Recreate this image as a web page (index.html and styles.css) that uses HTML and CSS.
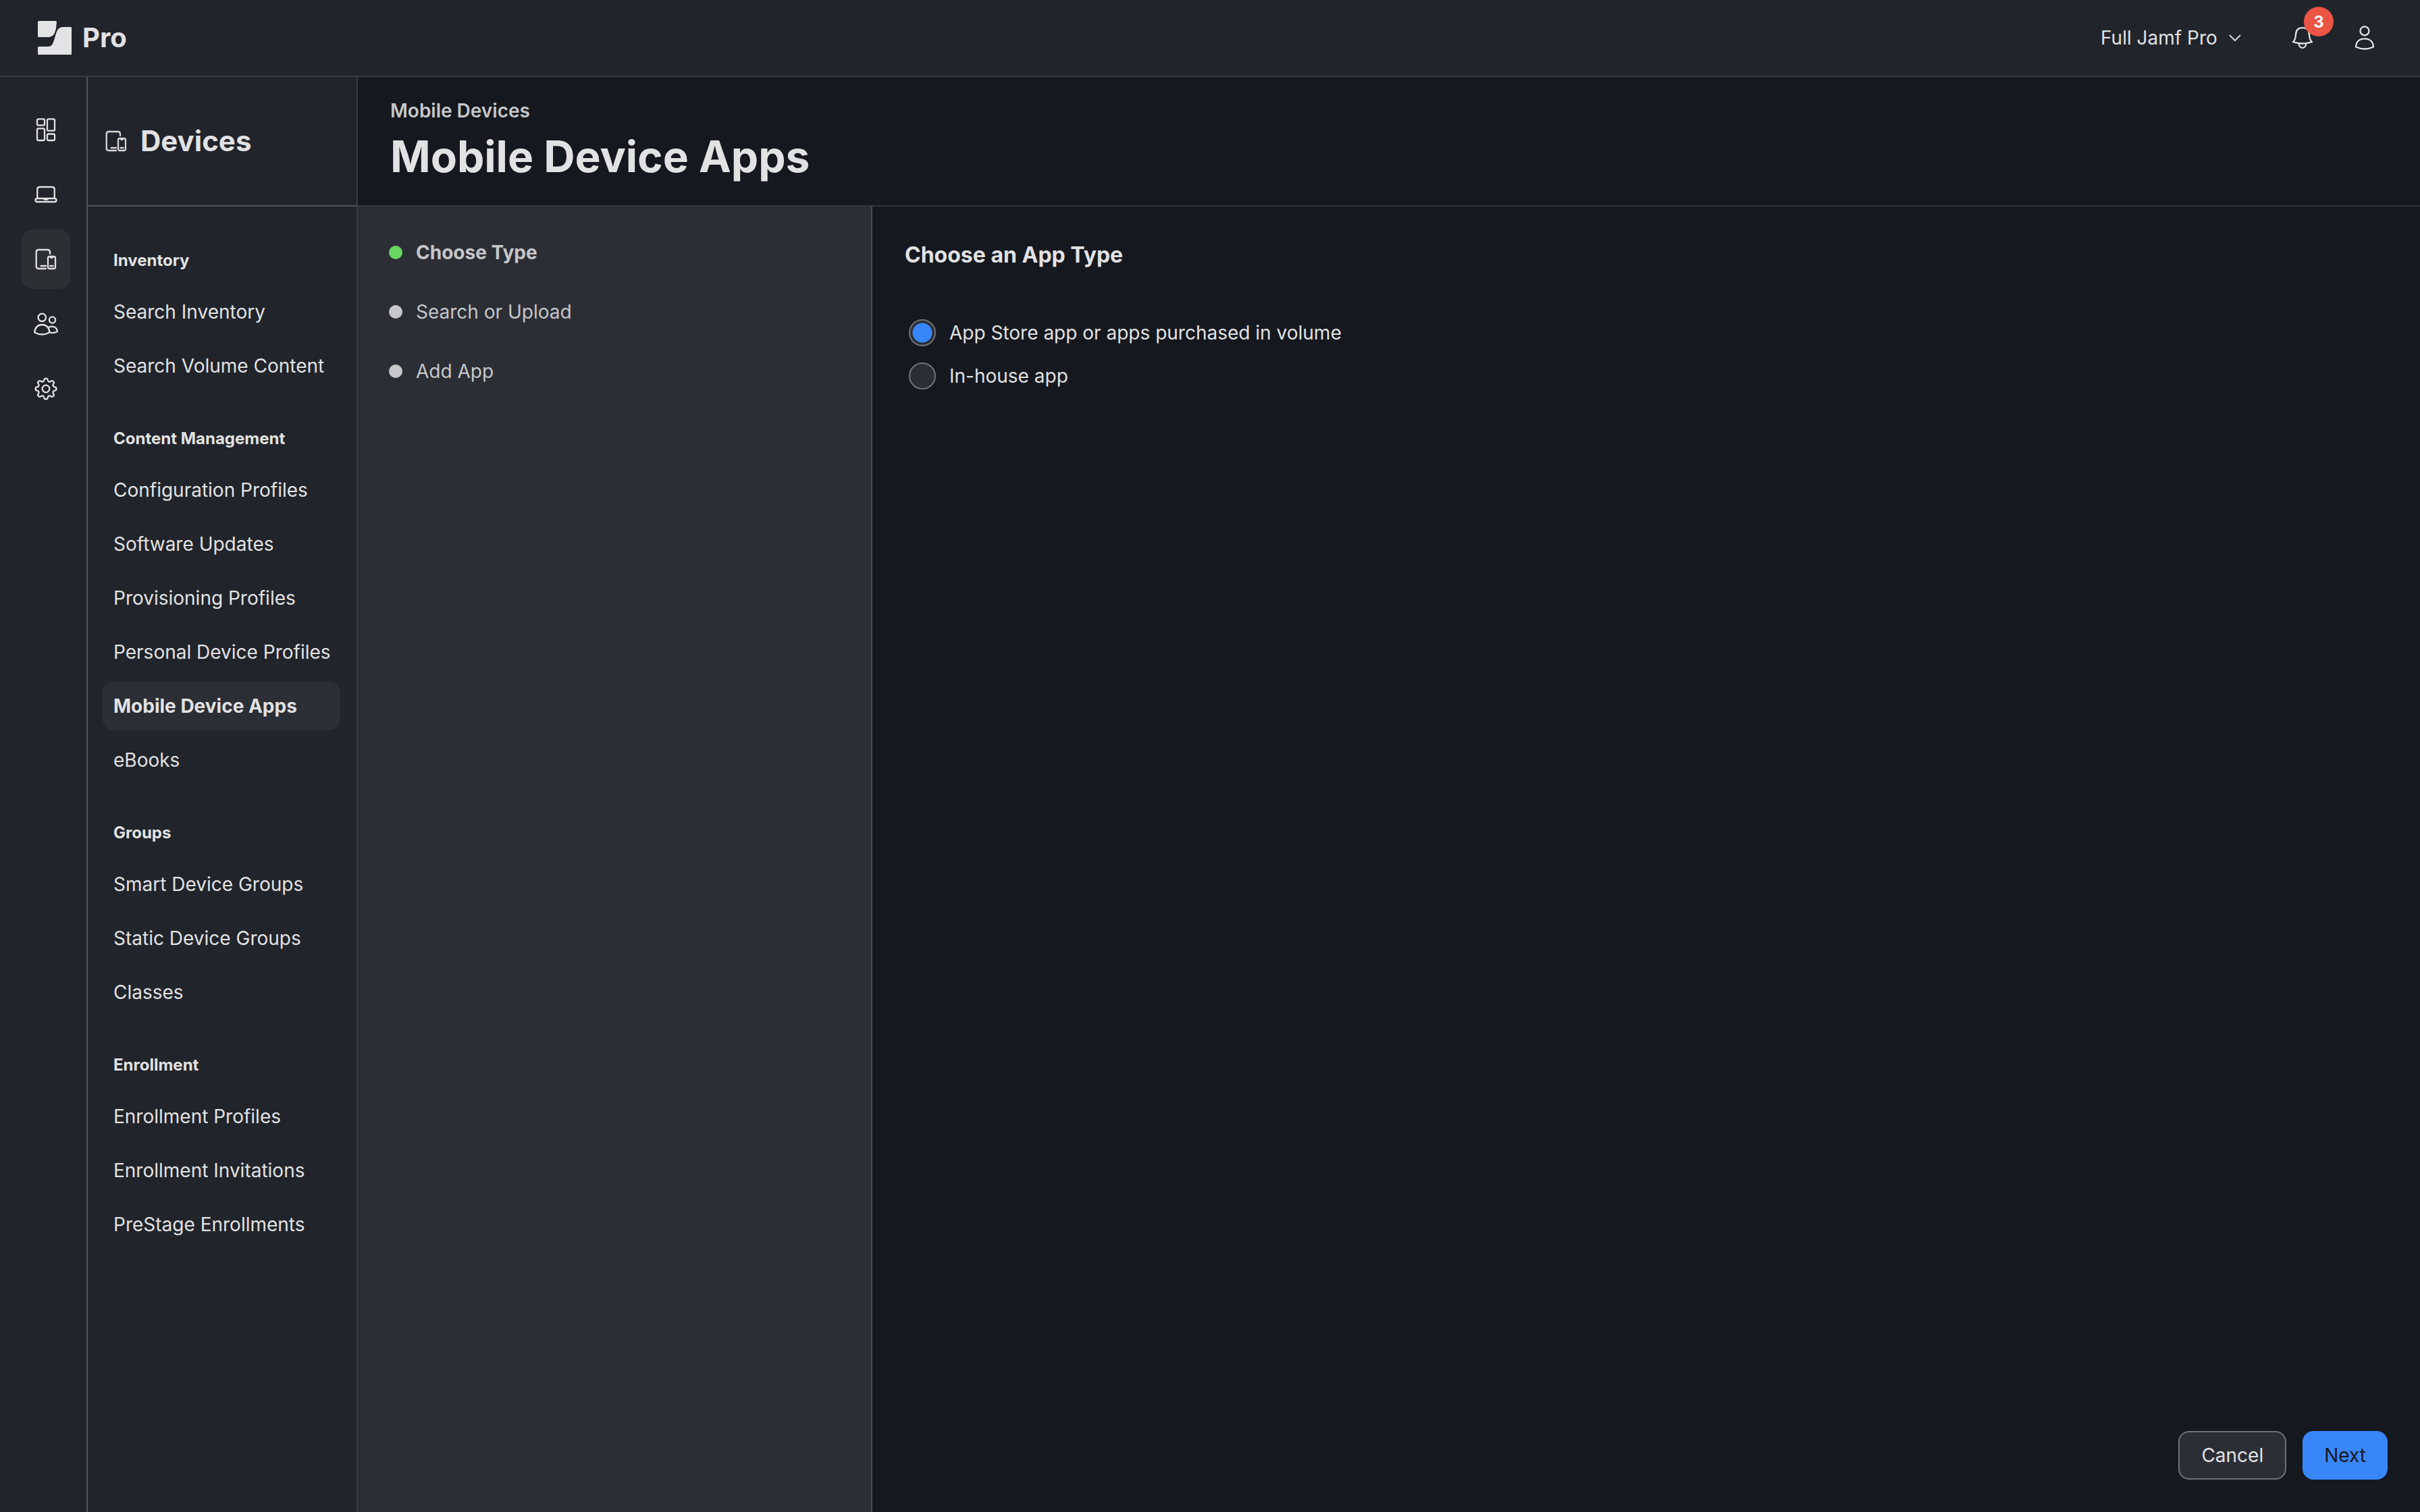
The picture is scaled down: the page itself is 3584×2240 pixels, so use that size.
FILE: index.html
```html
<!DOCTYPE html>
<html lang="en">
<head>
  <meta charset="UTF-8" />
  <meta name="viewport" content="width=device-width, initial-scale=1.0"/>
  <title>Mobile Device Apps</title>
  <link rel="stylesheet" href="styles.css">
</head>
<body>
  <!-- Icons used more than once -->
  <svg class="sprite" aria-hidden="true">
    <symbol id="icon-devices" viewBox="0 0 40 40">
      <path d="M26 12V9.500Q26 6 22.500 6H9.200Q5.700 6 5.700 9.500V30.500Q5.700 34 9.200 34H20M12.500 30H20"/>
      <rect x="23" y="16" width="11" height="18" rx="2.500"/>
      <path d="M26.500 16.500Q27 18 28.500 18T30.500 16.500M26.300 30H30.700"/>
    </symbol>
    <symbol id="gear-tooth" viewBox="-20 -20 40 40">
      <path d="M-4.400 -10.700C-3.200 -11.200 -2.800 -11.800 -2.700 -13C-2.500 -16.300 2.500 -16.300 2.700 -13C2.800 -11.800 3.200 -11.200 4.400 -10.700"/>
    </symbol>
  </svg>

  <header class="topbar">
    <a class="logo" href="#">
      <svg class="logo-mark" viewBox="0 0 50 50" aria-hidden="true">
        <path d="M1.500 0H26.500Q28 0 27.900 1.500C27 14 25.500 24 15 24H1.500Q0 24 0 22.500V1.500Q0 0 1.500 0Z"/>
        <path d="M38 9H49Q50 9 50 10V49Q50 50 49 50H1.500Q0 50 0 48.500V39.500Q0 38 1.500 38H14C21 38 22 35 24.500 27C28 15 29 9 38 9Z"/>
      </svg>
      <span>Pro</span>
    </a>
    <div class="topbar-right">
      <div class="site-picker">
        <select class="site-select" aria-label="Site">
          <option>Full Jamf Pro</option>
        </select>
        <svg class="chevron" viewBox="0 0 24 24" aria-hidden="true"><path d="M4 8L12 16L20 8"/></svg>
      </div>
      <button class="icon-btn bell" type="button" aria-label="Notifications">
        <svg class="icon" viewBox="0 0 40 40" aria-hidden="true">
          <path d="M6 26.200C9 23.500 9.800 20 10 15.500C10.300 8.800 14 5.200 20 5.200S29.700 8.800 30 15.500C30.200 20 31 23.500 34 26.200Q20 30.800 6 26.200Z"/>
          <path d="M14.700 28.500C15 37 25 37 25.300 28.500"/>
        </svg>
        <span class="badge">3</span>
      </button>
      <button class="icon-btn" type="button" aria-label="Account">
        <svg class="icon" viewBox="0 0 40 40" aria-hidden="true">
          <circle cx="20" cy="9.800" r="6.500"/>
          <path d="M7 33.500C7.500 25.500 12.500 21.300 20 21.300S32.500 25.500 33 33.500Q20 39.500 7 33.500Z"/>
        </svg>
      </button>
    </div>
  </header>

  <div class="layout">
    <nav class="rail" aria-label="Main">
      <a class="rail-item" href="#" aria-label="Dashboard">
        <svg class="icon" viewBox="0 0 40 40" aria-hidden="true">
          <rect x="7" y="4.300" width="11" height="9.400" rx="2"/>
          <rect x="7" y="18.300" width="11" height="17.700" rx="2"/>
          <rect x="22" y="4.300" width="11" height="17.400" rx="2"/>
          <rect x="22" y="26.500" width="11" height="9.500" rx="2"/>
        </svg>
      </a>
      <a class="rail-item" href="#" aria-label="Computers">
        <svg class="icon" viewBox="0 0 40 40" aria-hidden="true">
          <path d="M7.300 25.500V12.500Q7.300 9 10.800 9H29.200Q32.700 9 32.700 12.500V25.500"/>
          <rect x="4.500" y="26" width="31" height="5" rx="2.500"/>
          <path d="M17.500 27.500H22.500"/>
        </svg>
      </a>
      <a class="rail-item active" href="#" aria-label="Devices">
        <svg class="icon" aria-hidden="true"><use href="#icon-devices"/></svg>
      </a>
      <a class="rail-item" href="#" aria-label="Users">
        <svg class="icon" viewBox="0 0 40 40" aria-hidden="true">
          <circle cx="14.300" cy="10.300" r="5.700"/>
          <circle cx="29.500" cy="14" r="4.600"/>
          <path d="M3.200 32.500C3.500 25.500 8 21 14.300 21S25.100 25.500 25.400 32.500Q14.300 38.500 3.200 32.500Z"/>
          <path d="M23.500 25.200C29 21.800 36.500 24 36.800 31.300Q31.500 34 25.800 32.500"/>
        </svg>
      </a>
      <a class="rail-item" href="#" aria-label="Settings">
        <svg class="icon" viewBox="-20 -20 40 40" aria-hidden="true">
          <circle r="5.300"/>
          <use href="#gear-tooth" x="-20" y="-20" width="40" height="40"/>
          <use href="#gear-tooth" x="-20" y="-20" width="40" height="40" transform="rotate(45)"/>
          <use href="#gear-tooth" x="-20" y="-20" width="40" height="40" transform="rotate(90)"/>
          <use href="#gear-tooth" x="-20" y="-20" width="40" height="40" transform="rotate(135)"/>
          <use href="#gear-tooth" x="-20" y="-20" width="40" height="40" transform="rotate(180)"/>
          <use href="#gear-tooth" x="-20" y="-20" width="40" height="40" transform="rotate(225)"/>
          <use href="#gear-tooth" x="-20" y="-20" width="40" height="40" transform="rotate(270)"/>
          <use href="#gear-tooth" x="-20" y="-20" width="40" height="40" transform="rotate(315)"/>
        </svg>
      </a>
    </nav>

    <aside class="sidebar">
      <div class="sidebar-title">
        <svg class="icon" aria-hidden="true"><use href="#icon-devices"/></svg>
        <h2>Devices</h2>
      </div>
      <nav class="menu" aria-label="Devices">
        <section class="menu-group">
          <h3>Inventory</h3>
          <a href="#">Search Inventory</a>
          <a href="#">Search Volume Content</a>
        </section>
        <section class="menu-group">
          <h3>Content Management</h3>
          <a href="#">Configuration Profiles</a>
          <a href="#">Software Updates</a>
          <a href="#">Provisioning Profiles</a>
          <a href="#">Personal Device Profiles</a>
          <a class="active" href="#">Mobile Device Apps</a>
          <a href="#">eBooks</a>
        </section>
        <section class="menu-group">
          <h3>Groups</h3>
          <a href="#">Smart Device Groups</a>
          <a href="#">Static Device Groups</a>
          <a href="#">Classes</a>
        </section>
        <section class="menu-group">
          <h3>Enrollment</h3>
          <a href="#">Enrollment Profiles</a>
          <a href="#">Enrollment Invitations</a>
          <a href="#">PreStage Enrollments</a>
        </section>
      </nav>
    </aside>

    <main class="page">
      <div class="page-header">
        <a class="breadcrumb" href="#">Mobile Devices</a>
        <h1>Mobile Device Apps</h1>
      </div>
      <div class="page-body">
        <ol class="steps">
          <li class="current">Choose Type</li>
          <li>Search or Upload</li>
          <li>Add App</li>
        </ol>
        <form class="panel">
          <h2 id="typeTitle">Choose an App Type</h2>
          <div class="options" role="radiogroup" aria-labelledby="typeTitle">
            <label class="option"><input type="radio" name="appType" value="store" checked>App Store app or apps purchased in volume</label>
            <label class="option"><input type="radio" name="appType" value="inhouse">In-house app</label>
          </div>
          <div class="actions">
            <button class="btn" type="button">Cancel</button>
            <button class="btn btn-primary" type="button">Next</button>
          </div>
        </form>
      </div>
    </main>
  </div>
</body>
</html>
```

FILE: styles.css
```css
* {
  box-sizing: border-box;
}

body {
  margin: 0;
  min-height: 100vh;
  display: flex;
  flex-direction: column;
  font-family: Inter, sans-serif;
  font-optical-sizing: none;
  font-size: 28px;
  line-height: 40px;
  color: #e2e2e3;
  background-color: #15181f;
}

h1,
h2,
h3 {
  margin: 0;
}

a {
  color: inherit;
  text-decoration: none;
}

button,
select {
  font: inherit;
  color: inherit;
}

.sprite {
  display: none;
}

.icon {
  display: block;
  width: 40px;
  height: 40px;
  flex-shrink: 0;
  fill: none;
  stroke: #d6d7d8;
  stroke-width: 2.3;
  stroke-linecap: round;
  stroke-linejoin: round;
}

/* Top bar */
.topbar {
  display: flex;
  align-items: center;
  justify-content: space-between;
  height: 114px;
  padding: 0 62px 0 56px;
  background-color: #21242b;
  border-bottom: 2px solid #3b3c40;
}

.logo {
  display: flex;
  align-items: center;
  gap: 16px;
  font-size: 40px;
  font-weight: 700;
}

.logo-mark {
  width: 50px;
  height: 50px;
  fill: #e2e3e5;
}

.topbar-right {
  display: flex;
  align-items: center;
}

.site-picker {
  display: flex;
  align-items: center;
  gap: 14px;
  margin-right: 68px;
}

.site-select {
  appearance: none;
  padding: 0;
  border: none;
  background: none;
  cursor: pointer;
}

.chevron {
  width: 24px;
  height: 24px;
  fill: none;
  stroke: #d6d7d8;
  stroke-width: 2;
  pointer-events: none;
}

.icon-btn {
  padding: 0;
  border: none;
  background: none;
  cursor: pointer;
}

.icon-btn .icon,
.rail-item .icon {
  stroke: #e2e2e3;
}

.bell {
  position: relative;
  margin-right: 52px;
}

.badge {
  position: absolute;
  top: -26px;
  left: 22px;
  width: 44px;
  height: 44px;
  border-radius: 50%;
  background-color: #ec5545;
  color: #fff;
  font-size: 24px;
  font-weight: 700;
  line-height: 46px;
  text-align: center;
}

.layout {
  display: flex;
  flex: 1;
}

/* Icon rail */
.rail {
  display: flex;
  flex-direction: column;
  gap: 8px;
  flex-shrink: 0;
  width: 130px;
  padding: 34px 24px 34px 32px;
  background-color: #21242b;
  border-right: 2px solid #545457;
}

.rail-item {
  display: flex;
  align-items: center;
  justify-content: center;
  height: 88px;
  border-radius: 16px;
}

.rail-item.active {
  background-color: #2c2f33;
}

/* Devices menu */
.sidebar {
  flex-shrink: 0;
  width: 400px;
  background-color: #21242b;
  border-right: 2px solid #3b3c40;
}

.sidebar-title {
  display: flex;
  align-items: center;
  gap: 16px;
  height: 192px;
  padding-left: 22px;
  border-bottom: 2px solid #545457;
}

.sidebar-title h2 {
  font-size: 42px;
  font-weight: 700;
}

.menu {
  display: flex;
  flex-direction: column;
  gap: 54px;
  padding: 62px 24px 62px 22px;
}

.menu-group {
  display: flex;
  flex-direction: column;
  gap: 8px;
}

.menu h3 {
  margin-bottom: 14px;
  padding-left: 16px;
  font-size: 24px;
  font-weight: 700;
  line-height: 36px;
}

.menu a {
  padding: 16px;
  border-radius: 16px;
  white-space: nowrap;
}

.menu .active {
  background-color: #2c2e36;
  font-weight: 700;
}

/* Page */
.page {
  display: flex;
  flex-direction: column;
  flex: 1;
}

.page-header {
  display: flex;
  flex-direction: column;
  gap: 8px;
  height: 192px;
  padding: 30px 48px;
  border-bottom: 2px solid #313438;
}

.page-header h1 {
  font-size: 64px;
  font-weight: 700;
  line-height: 80px;
}

.breadcrumb {
  align-self: flex-start;
  color: #c6c7c9;
  font-weight: 600;
}

.page-body {
  display: flex;
  flex: 1;
}

.steps {
  display: flex;
  flex-direction: column;
  gap: 48px;
  flex-shrink: 0;
  width: 762px;
  margin: 0;
  padding: 48px 46px;
  list-style: none;
  color: #c6c7c9;
  background-color: #2c2e36;
  border-right: 2px solid #494b4f;
}

.steps li {
  display: flex;
  align-items: center;
  gap: 20px;
}

.steps li::before {
  content: '';
  width: 20px;
  height: 20px;
  border-radius: 50%;
  background-color: #c6c7c9;
}

.steps .current {
  font-weight: 700;
}

.steps .current::before {
  background-color: #69d660;
}

.panel {
  display: flex;
  flex-direction: column;
  flex: 1;
  padding: 52px 48px 48px;
}

.panel h2 {
  font-size: 32px;
  font-weight: 700;
}

.options {
  display: flex;
  flex-direction: column;
  gap: 24px;
  margin-top: 75px;
  padding-left: 6px;
}

.option {
  display: flex;
  align-items: center;
  gap: 20px;
  cursor: pointer;
}

.option input {
  appearance: none;
  width: 40px;
  height: 40px;
  margin: 0;
  border: 2px solid #717276;
  border-radius: 50%;
  background-color: #2c2e36;
}

.option input:checked {
  background-image: radial-gradient(circle, #3886f9 14px, transparent 15px);
}

.actions {
  display: flex;
  justify-content: flex-end;
  gap: 24px;
  margin-top: auto;
}

.btn {
  height: 72px;
  padding: 0 32px;
  border: 2px solid #717276;
  border-radius: 16px;
  background-color: #2c2e36;
  cursor: pointer;
}

.btn-primary {
  border: none;
  background-color: #3886f9;
  color: #15181f;
}
```
